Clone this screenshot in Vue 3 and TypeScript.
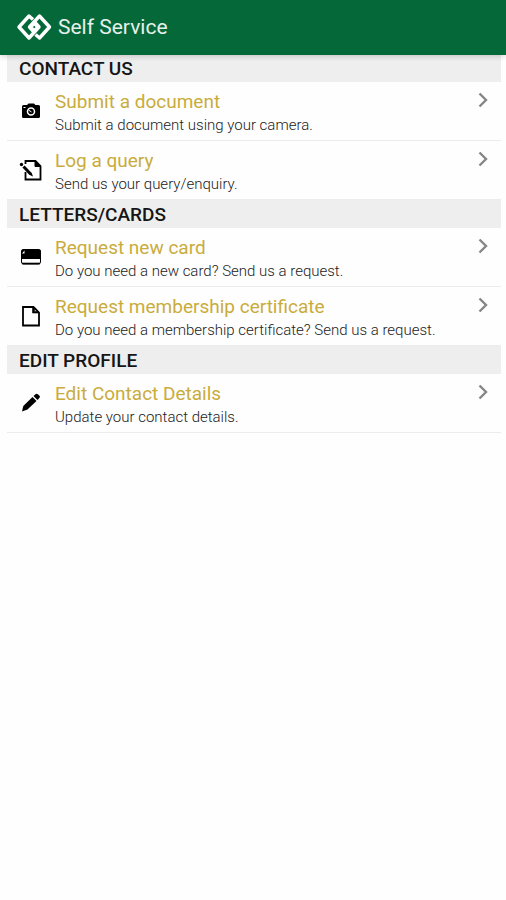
<script setup lang="ts">
type IconName = 'camera' | 'query' | 'card' | 'file' | 'pencil'

interface Item {
  title: string
  text: string
  icon: IconName
}

interface Section {
  heading: string
  items: Item[]
}

const sections: Section[] = [
  {
    heading: 'CONTACT US',
    items: [
      { title: 'Submit a document', text: 'Submit a document using your camera.', icon: 'camera' },
      { title: 'Log a query', text: 'Send us your query/enquiry.', icon: 'query' },
    ],
  },
  {
    heading: 'LETTERS/CARDS',
    items: [
      { title: 'Request new card', text: 'Do you need a new card? Send us a request.', icon: 'card' },
      {
        title: 'Request membership certificate',
        text: 'Do you need a membership certificate? Send us a request.',
        icon: 'file',
      },
    ],
  },
  {
    heading: 'EDIT PROFILE',
    items: [{ title: 'Edit Contact Details', text: 'Update your contact details.', icon: 'pencil' }],
  },
]
</script>

<template>
  <div class="page">
    <header class="bar">
      <svg class="logo" viewBox="0 0 36 28" aria-hidden="true">
        <g fill="none" stroke="#fff" stroke-width="3.4" stroke-linejoin="round">
          <path d="M17 6.500 L13 3 L3 14 L13 25 L23 14 L19 9.500 L14.500 14 L17.500 17" />
          <path d="M19.500 21.500 L23.500 25 L33.500 14 L23.500 3 L13.500 14 L17.500 18.500 L22 14 L19 11" />
        </g>
      </svg>
      <h1 class="bar-title">Self Service</h1>
    </header>

    <main class="content">
      <section v-for="section in sections" :key="section.heading">
        <h2 class="heading">{{ section.heading }}</h2>
        <ul class="list">
          <li v-for="item in section.items" :key="item.title" class="entry">
            <a href="#" class="row">
              <svg class="icon" viewBox="0 0 24 24" aria-hidden="true">
                <template v-if="item.icon === 'camera'">
                  <path d="M3 7.500 Q3 6 4.500 6 H8 L9.500 4.500 H15 L16.500 6 H19.500 Q21 6 21 7.500 V17.500 Q21 19 19.500 19 H4.500 Q3 19 3 17.500 Z" />
                  <circle cx="12" cy="12.500" r="3.500" fill="none" stroke="#fff" stroke-width="1.500" />
                  <path d="M9.500 11 L12.500 13" stroke="#fff" stroke-width="1" />
                  <path d="M4.500 8.500 H6.500" stroke="#fff" stroke-width="1" />
                </template>
                <template v-else-if="item.icon === 'query'">
                  <path d="M6.500 14 V21.500 H21.500 V8 L16.500 3 H6.500 V6" fill="none" stroke="#000" stroke-width="1.800" />
                  <path d="M16 3 V8.500 H21.500 Z" stroke="#000" />
                  <path d="M4.500 8.500 L11.500 16" stroke="#000" stroke-width="3" />
                  <circle cx="2.500" cy="6.500" r="1.700" />
                  <path d="M10.200 16.800 L12.500 14.500 L14 18.500 Z" />
                </template>
                <template v-else-if="item.icon === 'card'">
                  <rect x="2.500" y="5" width="19" height="14" rx="2" fill="#fff" stroke="#000" stroke-width="1" />
                  <path d="M2 6.500 Q2 4 4.500 4 H19.500 Q22 4 22 6.500 V14 H2 Z" />
                  <path d="M3 18.500 H21" stroke="#000" stroke-width="1.600" />
                  <path d="M3 8.500 L5.500 5.500 V8.500 Z" fill="#fff" />
                </template>
                <template v-else-if="item.icon === 'file'">
                  <path d="M4 3 H14.500 L20 8.500 V21.500 H4 Z" fill="none" stroke="#000" stroke-width="1.800" />
                  <path d="M13.500 3 V9 H20 L18 7.500 H15.500 V4.500 Z" stroke="#000" stroke-width="0.600" />
                </template>
                <template v-else>
                  <path d="M3 20.500 L4.300 15 L13.500 6 L17.500 10 L8.500 18.500 Z" />
                  <path d="M14.500 5 L16.800 3 Q17.800 2.200 18.800 3.200 L20.500 4.800 Q21.500 5.800 20.500 6.800 L18.500 9 Z" />
                </template>
              </svg>
              <span class="texts">
                <span class="title">{{ item.title }}</span>
                <span class="text">{{ item.text }}</span>
              </span>
              <svg class="chevron" viewBox="0 0 10 16" aria-hidden="true">
                <path d="M1.500 1.500 L8 8 L1.500 14.500" fill="none" stroke="#868686" stroke-width="2.400" />
              </svg>
            </a>
          </li>
        </ul>
      </section>
    </main>
  </div>
</template>

<style>
body {
  background: #fefefe;
}
</style>

<style scoped>
.page {
  font-family: Roboto, "Liberation Sans", sans-serif;
}

.bar {
  position: relative;
  display: flex;
  align-items: center;
  gap: 6px;
  box-sizing: border-box;
  height: 55px;
  padding: 0 16px 2px;
  background: #056839;
  box-shadow: 0 1px 6px rgba(0, 0, 0, 0.2);
}

.logo {
  width: 36px;
  height: 28px;
}

.bar-title {
  margin: 0;
  color: #e6f0ea;
  font-size: 21px;
  font-weight: 400;
  line-height: 28px;
}

.content {
  margin-top: -1px;
  padding: 0 5px 0 7px;
}

.heading {
  margin: 0;
  padding: 2px 12px 0;
  background: #eee;
  color: #151515;
  font-size: 19px;
  font-weight: 500;
  line-height: 26px;
}

.list {
  margin: 0;
  padding: 0;
  list-style: none;
}

.entry {
  border-bottom: 1px solid #ececec;
}

.row {
  display: flex;
  align-items: center;
  height: 58px;
  padding: 0 12px;
  text-decoration: none;
}

.icon {
  flex: none;
  width: 24px;
  height: 24px;
  margin-right: 12px;
}

.texts {
  display: flex;
  flex: 1;
  flex-direction: column;
  padding-top: 2px;
}

.title {
  color: #c9ac3c;
  font-size: 19px;
  line-height: 26px;
}

.text {
  color: #222;
  font-size: 15px;
  font-weight: 300;
  line-height: 20px;
}

.chevron {
  flex: none;
  align-self: flex-start;
  width: 10px;
  height: 16px;
  margin: 10px 1px 0 0;
}
</style>
